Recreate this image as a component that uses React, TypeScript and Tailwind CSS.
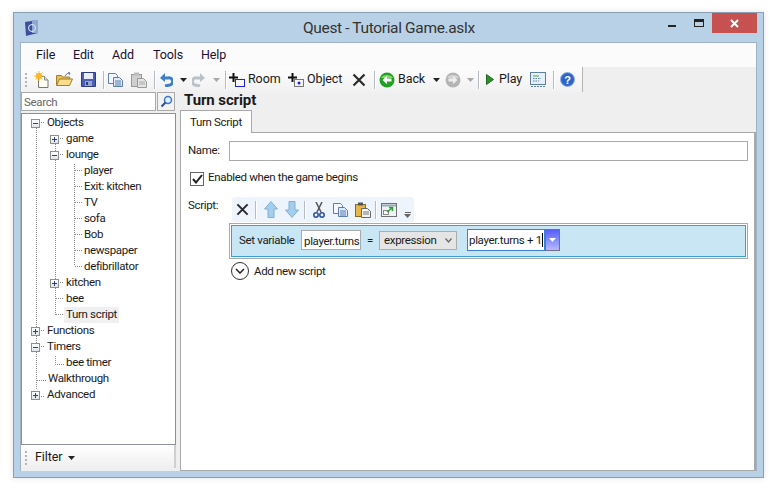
import React from "react";

const font = { fontFamily: 'Roboto, "Noto Sans", sans-serif' };

function Sep({ m }: { m: string }) {
  return <div className={`w-[2px] h-[18px] border-l border-[#b5bcc4] bg-white ${m}`} />;
}
function Drop({ c = "#222", className = "" }: { c?: string; className?: string }) {
  return (
    <svg width="7" height="4" viewBox="0 0 7 4" className={className}>
      <path d="M0 0h7L3.5 4z" fill={c} />
    </svg>
  );
}
function NewIcon() {
  return (
    <svg width="16" height="18" viewBox="0 0 16 18">
      <path d="M4.5 5.5h6l3.5 3.5v7.5H4.500z" fill="#fffef2" stroke="#777" />
      <path d="M10.500 5.500v3.500H14" fill="#e8e8e0" stroke="#888" />
      <circle cx="5" cy="5" r="3" fill="#f9a51a" />
      <path d="M5 0v10M0 5h10M1.500 1.500l7 7M8.500 1.500l-7 7" stroke="#fbc02d" />
    </svg>
  );
}
function OpenIcon() {
  return (
    <svg width="17" height="15" viewBox="0 0 17 15">
      <path d="M.5 13V3.500h5l1 1.500h7v8z" fill="#e8c15a" stroke="#a07e2a" />
      <path d="M.5 13.500l3-6.500h13l-3 6.500z" fill="#f8dd8c" stroke="#a07e2a" />
      <path d="M9 4c1-2 3-3 5-3M12 .500l2 .500-1 2" fill="none" stroke="#6b7a88" />
    </svg>
  );
}
function SaveIcon() {
  return (
    <svg width="15" height="15" viewBox="0 0 15 15">
      <path d="M.5.500h14v14H.500z" fill="#4a5fb5" stroke="#2d3b80" />
      <rect x="3" y="1" width="9" height="6" fill="#e8edf7" />
      <rect x="4" y="9" width="7" height="5" fill="#9aa6c8" />
      <rect x="5" y="10" width="2" height="3" fill="#2d3b80" />
    </svg>
  );
}
function CopyIcon({ gray = false }: { gray?: boolean }) {
  const s = gray ? "#9aa" : "#5a7fb0";
  return (
    <svg width="15" height="14" viewBox="0 0 15 14">
      <path d="M.5.500h7l2 2v8h-9z" fill="#f4f8fc" stroke={s} />
      <path d="M5.500 4.500h6l3 3v6h-9z" fill="#dfeaf7" stroke={s} />
      <path d="M7 8h6M7 10h6M7 12h6" stroke={s} />
    </svg>
  );
}
function PasteIcon({ gray = false }: { gray?: boolean }) {
  const b = gray ? "#cfcfcf" : "#e7b74a";
  const s = gray ? "#999" : "#8a6a1f";
  return (
    <svg width="16" height="16" viewBox="0 0 16 16">
      <rect x=".5" y="2.500" width="10" height="12" fill={b} stroke={s} />
      <rect x="3" y=".5" width="5" height="3" fill={gray ? "#bbb" : "#555"} />
      <path d="M6.500 6.500h6l3 3v6h-9z" fill={gray ? "#e4e4e4" : "#f3f3f3"} stroke={gray ? "#999" : "#666"} />
      <path d="M8 10h6M8 12h6" stroke={gray ? "#aaa" : "#777"} />
    </svg>
  );
}
function Undo({ flip = false, c = "#3f7fc6" }: { flip?: boolean; c?: string }) {
  return (
    <svg width="13" height="14" viewBox="0 0 13 14" style={flip ? { transform: "scaleX(-1)" } : undefined}>
      <path d="M3 5h5a3.500 3.500 0 0 1 2 7L5 13" fill="none" stroke={c} strokeWidth="3" />
      <path d="M5 0v9L0 5z" fill={c} />
    </svg>
  );
}
function PlusShape({ children, w }: { children: React.ReactNode; w: number }) {
  return (
    <svg width={w} height="14" viewBox={`0 0 ${w} 14`}>
      <path d="M4.500 0v9M0 4.500h9" stroke="#111" strokeWidth="2" />
      {children}
    </svg>
  );
}
function XIcon({ size = 14 }: { size?: number }) {
  return (
    <svg width={size} height={size} viewBox="0 0 14 14">
      <path d="M1.500 1.500l11 11M12.500 1.500l-11 11" stroke="#2b2b2b" strokeWidth="2.200" />
    </svg>
  );
}
function Round({ c1, c2, back, arrow = "#fff" }: { c1: string; c2: string; back: boolean; arrow?: string }) {
  return (
    <svg width="16" height="16" viewBox="0 0 16 16">
      <circle cx="8" cy="8" r="7.500" fill={c2} />
      <path d="M2 6a6.500 5 0 0 1 12 0z" fill={c1} />
      <path
        d={back ? "M3.500 8L8 3.800V6.500h4.500v3H8v2.700z" : "M12.500 8L8 3.800V6.500H3.500v3H8v2.700z"}
        fill={arrow}
      />
    </svg>
  );
}
function ScriptIcon() {
  return (
    <svg width="16" height="15" viewBox="0 0 16 15">
      <rect x=".5" y=".5" width="15" height="12" fill="#e6eff8" stroke="#5f7f9f" />
      <path d="M3 4h6" stroke="#4aa050" strokeWidth="1" />
      <path d="M3 6.500h8M3 9h6" stroke="#64809f" strokeDasharray="1.500 1" />
      <path d="M1 14.500h14" stroke="#5f7f9f" strokeDasharray="2 1" />
    </svg>
  );
}
function HelpIcon() {
  return (
    <svg width="15" height="15" viewBox="0 0 15 15">
      <circle cx="7.500" cy="7.500" r="7" fill="#2f63c8" stroke="#8fb0e0" />
      <text x="7.500" y="11.500" fontSize="11" fontWeight="700" fill="#fff" textAnchor="middle" fontFamily="Liberation Sans">?</text>
    </svg>
  );
}
function Arrow({ up }: { up: boolean }) {
  return (
    <svg width="14" height="17" viewBox="0 0 14 17">
      <path
        d={up ? "M7 .5L13.500 8H10v8.500H4V8H.5z" : "M7 16.500L13.500 9H10V.5H4V9H.5z"}
        fill="#a5cdec"
        stroke="#7fb0da"
      />
    </svg>
  );
}
function Cut() {
  return (
    <svg width="12" height="16" viewBox="0 0 12 16">
      <path d="M3 0l5 10M9 0L4 10" stroke="#555" strokeWidth="1.500" />
      <circle cx="3" cy="13" r="2.200" fill="none" stroke="#2d4fa0" strokeWidth="1.500" />
      <circle cx="9" cy="13" r="2.200" fill="none" stroke="#2d4fa0" strokeWidth="1.500" />
    </svg>
  );
}
function PopIcon() {
  return (
    <svg width="16" height="14" viewBox="0 0 16 14">
      <rect x=".5" y=".5" width="15" height="13" fill="#eef2f6" stroke="#707070" />
      <path d="M1 2.500h14" stroke="#9ab" strokeWidth="2" />
      <rect x="2.500" y="7.500" width="5" height="4" fill="#fff" stroke="#888" />
      <path d="M6 9l5-4M8 4.500h3.500V8" fill="none" stroke="#2ea02e" strokeWidth="1.500" />
    </svg>
  );
}
function Grip({ m = "" }: { m?: string }) {
  return (
    <div className={`flex flex-col gap-[2px] w-[2px] ${m}`}>
      {[0, 1, 2, 3].map((i) => (
        <div key={i} className="w-[2px] h-[2px] bg-[#b4b4b4]" />
      ))}
    </div>
  );
}

function TreeLines() {
  return (
    <svg width="153" height="330" className="absolute left-0 top-0" fill="none" stroke="#8a8a8a" strokeDasharray="1 1" shapeRendering="crispEdges">
      <path d="M14.500 14V276M14.500 266.500H25" />
      <path d="M33.500 30V200.500M33.500 200.500H43M33.500 184.500H43" />
      <path d="M52.500 46V152M52.500 56.500H62M52.500 72.500H62M52.500 88.500H62M52.500 104.500H62M52.500 120.500H62M52.500 136.500H62M52.500 152.500H62" />
      <path d="M33.500 238V250.500H43" />
      <path d="M19 8.500H25M38 24.500H43M38 40.500H43M38 168.500H43M19 216.500H25M19 232.500H25M19 282.500H25" />
    </svg>
  );
}
function Box({ plus }: { plus: boolean }) {
  return (
    <div className="relative w-[9px] h-[9px] border border-[#8e8f8f] bg-gradient-to-b from-white to-[#dfe3e8]">
      <div className="absolute left-[1px] top-[3px] w-[5px] h-[1px] bg-[#2b3f80]" />
      {plus && <div className="absolute left-[3px] top-[1px] w-[1px] h-[5px] bg-[#2b3f80]" />}
    </div>
  );
}

const rows: { t: string; p: string; box?: "plus" | "minus"; sel?: boolean }[] = [
  { t: "Objects", p: "pl-[9px]", box: "minus" },
  { t: "game", p: "pl-[28px]", box: "plus" },
  { t: "lounge", p: "pl-[28px]", box: "minus" },
  { t: "player", p: "pl-[60px]" },
  { t: "Exit: kitchen", p: "pl-[60px]" },
  { t: "TV", p: "pl-[60px]" },
  { t: "sofa", p: "pl-[60px]" },
  { t: "Bob", p: "pl-[60px]" },
  { t: "newspaper", p: "pl-[60px]" },
  { t: "defibrillator", p: "pl-[60px]" },
  { t: "kitchen", p: "pl-[28px]", box: "plus" },
  { t: "bee", p: "pl-[42px]" },
  { t: "Turn script", p: "pl-[42px]", sel: true },
  { t: "Functions", p: "pl-[9px]", box: "plus" },
  { t: "Timers", p: "pl-[9px]", box: "minus" },
  { t: "bee timer", p: "pl-[42px]" },
  { t: "Walkthrough", p: "pl-[24px]" },
  { t: "Advanced", p: "pl-[9px]", box: "plus" },
];

export default function App() {
  return (
    <div className="w-[777px] h-[493px] bg-white pl-[13px] pt-[12px] text-[11.500px] tracking-[-0.33px] text-[#1a1a1a] whitespace-nowrap" style={font}>
      <div className="w-[751px] h-[466px] bg-[#b9d1e6] border border-[#8b9fb2] shadow-[0_0_6px_rgba(0,0,0,0.12)] flex flex-col">
        {/* title bar */}
        <div className="h-[29px] flex items-start shrink-0">
          <svg width="15" height="16" viewBox="0 0 15 16" className="ml-[10px] mt-[7px]">
            <path d="M1 2l13-2v13L2 16z" fill="#3d4f9c" />
            <path d="M8 0h6v13H8z" fill="#8fa8d2" />
            <circle cx="8" cy="8" r="3.500" fill="none" stroke="#e8eef8" />
          </svg>
          <div className="ml-[264px] mt-[4px] w-[174px] text-[15.500px] leading-[22px] tracking-[-0.35px] text-[#333]">Quest - Tutorial Game.aslx</div>
          <div className="ml-auto flex items-start mr-[6px]">
            <div className="w-[8px] h-[2px] bg-[#222] mt-[12px]" />
            <div className="w-[10px] h-[8px] border border-[#222] border-t-[3px] mt-[6px] ml-[18px]" />
            <div className="w-[45px] h-[20px] bg-[#c75050] ml-[8px] flex items-center justify-center">
              <svg width="9" height="9" viewBox="0 0 9 9">
                <path d="M1 1l7 7M8 1L1 8" stroke="#fff" strokeWidth="2" />
              </svg>
            </div>
          </div>
        </div>
        {/* client */}
        <div className="w-[737px] h-[429px] ml-[6px] border border-[#9fb2c6] border-b-0 bg-[#efefef] flex flex-col text-[#1a1a1a]">
          {/* menu */}
          <div className="h-[24px] shrink-0 bg-[#fbfbfb] flex items-center text-[12.500px] tracking-[-0.1px] text-[#1c1030] pl-[15px]">
            <span className="w-[37px]">File</span>
            <span className="w-[39px]">Edit</span>
            <span className="w-[41px]">Add</span>
            <span className="w-[48px]">Tools</span>
            <span>Help</span>
          </div>
          {/* toolbar */}
          <div className="h-[25px] w-[562px] shrink-0 bg-gradient-to-b from-[#fdfdfd] to-[#f1f1f1] border-r border-[#b5b5b5] flex items-center pl-[4px] text-[12.500px] tracking-[-0.1px]">
            <Grip />
            <div className="ml-[7px]"><NewIcon /></div>
            <div className="ml-[6px]"><OpenIcon /></div>
            <div className="ml-[8px]"><SaveIcon /></div>
            <Sep m="ml-[7px]" />
            <div className="ml-[3px]"><CopyIcon /></div>
            <div className="ml-[8px]"><PasteIcon gray /></div>
            <Sep m="ml-[7px]" />
            <div className="ml-[4px]"><Undo /></div>
            <Drop className="ml-[7px]" />
            <div className="ml-[5px]"><Undo flip c="#b9c2c6" /></div>
            <Drop c="#a8a8a8" className="ml-[8px]" />
            <Sep m="ml-[5px]" />
            <div className="ml-[2px]">
              <PlusShape w={16}><rect x="6.500" y="6.500" width="9" height="7" fill="none" stroke="#2222dd" /></PlusShape>
            </div>
            <span className="ml-[3px] w-[32px]">Room</span>
            <div className="ml-[8px]">
              <PlusShape w={16}>
                <rect x="6.500" y="6.500" width="9" height="7" fill="none" stroke="#777" />
                <circle cx="11" cy="10" r="1.500" fill="#2222dd" />
              </PlusShape>
            </div>
            <span className="ml-[3px] w-[36px]">Object</span>
            <div className="ml-[9px]"><XIcon /></div>
            <Sep m="ml-[8px]" />
            <div className="ml-[3px]"><Round c1="#7fdc5c" c2="#1fa021" back /></div>
            <span className="ml-[3px] w-[26px]">Back</span>
            <Drop className="ml-[9px]" />
            <div className="ml-[5px]"><Round c1="#d5d5d5" c2="#b4b4b4" back={false} arrow="#eee" /></div>
            <Drop c="#a8a8a8" className="ml-[6px]" />
            <Sep m="ml-[4px]" />
            <svg width="8" height="11" viewBox="0 0 8 11" className="ml-[6px]"><path d="M.5.5L7.500 5.500.5 10.500z" fill="#2f8f2f" stroke="#1d6a1d" /></svg>
            <span className="ml-[5px] w-[22px]">Play</span>
            <div className="ml-[9px]"><ScriptIcon /></div>
            <Sep m="ml-[7px]" />
            <div className="ml-[5px]"><HelpIcon /></div>
          </div>
          {/* body */}
          <div className="flex-1 flex min-h-0">
            {/* left */}
            <div className="w-[159px] shrink-0 flex flex-col">
              <div className="h-[21px] shrink-0 flex items-start">
                <div className="w-[135px] h-[19px] bg-white border border-[#aaa] text-[#666] pl-[2px] leading-[18px]">Search</div>
                <div className="w-[18px] h-[19px] ml-[1px] border border-[#aaa] bg-[#f2f2f2] flex items-center justify-center">
                  <svg width="13" height="13" viewBox="0 0 13 13">
                    <circle cx="8" cy="5" r="3.500" fill="#dfeefa" stroke="#3a78c8" strokeWidth="1.500" />
                    <path d="M5.500 7.500L1.500 11.500" stroke="#2b4f9a" strokeWidth="2" />
                  </svg>
                </div>
              </div>
              <div className="relative w-[155px] h-[332px] shrink-0 bg-white border border-[#8c8f93] pt-[1px]">
                <TreeLines />
                {rows.map((r) => (
                  <div key={r.t} className={`relative h-[16px] flex items-center ${r.p}`}>
                    {r.box && <Box plus={r.box === "plus"} />}
                    <span
                      className={`${r.box ? "ml-[5px]" : ""} px-[2px] h-[16px] leading-[15px] ${r.sel ? "bg-[#f0f0f0]" : "bg-white"}`}
                    >
                      {r.t}
                    </span>
                  </div>
                ))}
              </div>
              <div className="w-[155px] h-[23px] shrink-0 border-r-2 border-[#d0d0d0] bg-gradient-to-b from-white to-[#efefef] flex items-center pl-[4px] pt-[2px] text-[12.500px] tracking-[-0.1px]">
                <Grip />
                <span className="ml-[8px]">Filter</span>
                <Drop className="ml-[6px] mt-[1px]" />
              </div>
            </div>
            {/* right */}
            <div className="flex-1 flex flex-col min-w-0">
              <div className="h-[18px] shrink-0 pl-[4px] text-[15px] font-bold leading-[17px] tracking-[-0.1px]">Turn script</div>
              <div className="h-[23px] shrink-0 flex items-end">
                <div className="w-[72px] h-[23px] bg-white border border-b-0 border-[#a9a9a9] pl-[9px] leading-[22px]">Turn Script</div>
                <div className="flex-1 h-[1px] bg-[#a9a9a9] mr-0" />
              </div>
              <div className="flex-1 bg-white border-l border-[#a9a9a9] border-b border-r-2 border-r-[#a9a9a9] border-b-[#a9a9a9] border-t-0 pt-[8px] pl-[7px] min-h-0">
                <div className="flex items-center h-[20px]">
                  <span className="w-[41px]">Name:</span>
                  <div className="w-[519px] h-[20px] border border-[#aaa] bg-white" />
                </div>
                <div className="flex items-center h-[16px] mt-[10px] pl-[2px]">
                  <div className="w-[14px] h-[14px] border border-[#666] bg-white flex items-center justify-center">
                    <svg width="11" height="10" viewBox="0 0 11 10"><path d="M1 5l3 3.500L10 1" fill="none" stroke="#222" strokeWidth="2" /></svg>
                  </div>
                  <span className="ml-[4px] -mt-[2px]">Enabled when the game begins</span>
                </div>
                <div className="flex mt-[10px]">
                  <span className="w-[44px]">Script:</span>
                  <div className="w-[182px] h-[25px] rounded-[3px] bg-[#eef4fb] flex items-center pl-[4px]">
                    <XIcon size={13} />
                    <Sep m="ml-[6px]" />
                    <div className="ml-[7px]"><Arrow up /></div>
                    <div className="ml-[7px]"><Arrow up={false} /></div>
                    <Sep m="ml-[5px]" />
                    <div className="ml-[7px]"><Cut /></div>
                    <div className="ml-[8px]"><CopyIcon /></div>
                    <div className="ml-[7px]"><PasteIcon /></div>
                    <Sep m="ml-[4px]" />
                    <div className="ml-[4px]"><PopIcon /></div>
                    <div className="ml-[7px] flex flex-col items-center gap-[1px] mt-[11px]">
                      <div className="w-[6px] h-[1px] bg-[#666]" />
                      <Drop c="#666" />
                    </div>
                  </div>
                </div>
                <div className="w-[519px] h-[36px] ml-[41px] mt-[1px] border border-[#aaa] p-[1px]">
                  <div className="h-[32px] border border-[#3a9fd8] bg-[#c9e6f5] flex items-center pl-[7px] pb-[2px]">
                    <span className="w-[55px] mt-[1px]">Set variable</span>
                    <div className="ml-[7px] w-[60px] h-[20px] bg-white border border-[#aaa] pl-[2px] leading-[20px]">player.turns</div>
                    <span className="ml-[6px] w-[7px] mt-[1px]">=</span>
                    <div className="ml-[5px] w-[78px] h-[19px] bg-[#e5e5e5] border border-[#acacac] flex items-center pl-[4px]">
                      <span className="mt-[1px]">expression</span>
                      <svg width="7" height="5" viewBox="0 0 7 5" className="ml-auto mr-[4px]"><path d="M.5.5L3.500 4 6.500.5" fill="none" stroke="#666" strokeWidth="1.200" /></svg>
                    </div>
                    <div className="ml-[10px] w-[78px] h-[22px] bg-white border border-[#3a80d8] pl-[1px] flex items-center">
                      <span className="mt-[1px]">player.turns + 1</span>
                      <div className="w-[1px] h-[14px] bg-black" />
                    </div>
                    <div className="w-[15px] h-[22px] border border-[#707080] bg-gradient-to-b from-[#5a5aff] to-[#b8b8ff] flex items-center justify-center">
                      <Drop c="#fff" />
                    </div>
                  </div>
                </div>
                <div className="flex items-center ml-[43px] mt-[3px]">
                  <div className="w-[18px] h-[18px] rounded-full border border-[#333] bg-white flex items-center justify-center">
                    <svg width="10" height="6" viewBox="0 0 10 6"><path d="M1 1l4 4 4-4" fill="none" stroke="#222" strokeWidth="1.500" /></svg>
                  </div>
                  <span className="ml-[5px] mt-[1px]">Add new script</span>
                </div>
              </div>
            </div>
          </div>
        </div>
      </div>
    </div>
  );
}
